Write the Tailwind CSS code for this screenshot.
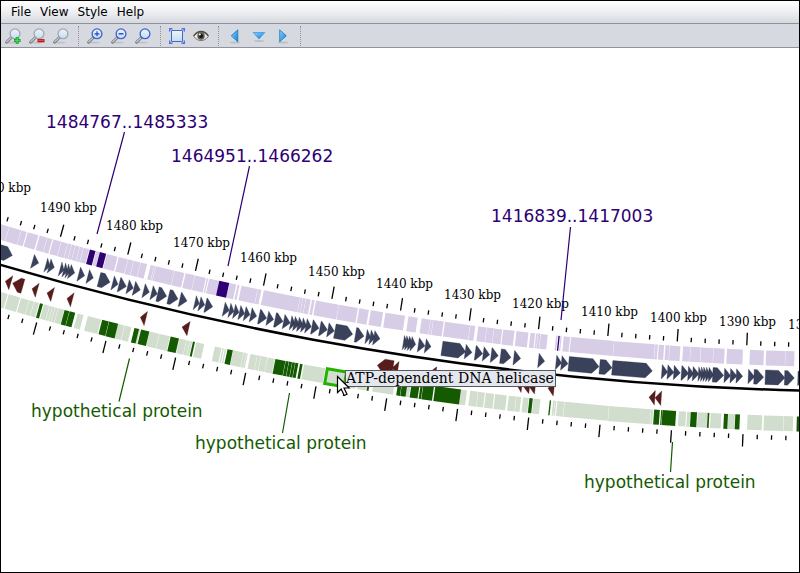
<!DOCTYPE html>
<html lang="en">
<head>
<meta charset="utf-8">
<title>Genome map</title>
<script src="https://cdn.jsdelivr.net/npm/@tailwindcss/browser@4"></script>
</head>
<body class="flex h-screen flex-col overflow-hidden border border-black bg-white font-['DejaVu_Sans',sans-serif] text-black">

<nav aria-label="Main menu" class="flex h-[22px] shrink-0 items-center gap-px bg-linear-to-b from-white via-[#eeeff2] to-[#d6d9df] px-1.5 text-xs">
  <button type="button" class="px-1">File</button>
  <button type="button" class="px-1">View</button>
  <button type="button" class="px-1">Style</button>
  <button type="button" class="px-1">Help</button>
</nav>

<div role="toolbar" aria-label="Map tools" class="flex h-[25px] shrink-0 items-center border-y border-[#8f929c] bg-[#d6d9df]">
  <svg class="absolute size-0" aria-hidden="true">
    <defs>
      <linearGradient id="blue" x1="0" y1="0" x2="1" y2="1">
        <stop offset="0" stop-color="#8fd0fa"/><stop offset="1" stop-color="#0f7fd8"/>
      </linearGradient>
      <linearGradient id="glass" x1="0" y1="0" x2="0" y2="1">
        <stop offset="0" stop-color="#eaf4fd"/><stop offset="1" stop-color="#c6dcf0"/>
      </linearGradient>
      <symbol id="lens" viewBox="0 0 16 16">
        <ellipse cx="7" cy="14.6" rx="6" ry="1" fill="#000" fill-opacity=".1"/>
        <path d="M1.6 14.2 6.4 9.6" stroke="#77797e" stroke-width="2.8" stroke-linecap="round"/>
        <path d="M1.7 13.9 6.2 9.6" stroke="#d4d5d8" stroke-width="1.1" stroke-linecap="round"/>
        <circle cx="10" cy="5.8" r="4.9" fill="url(#glass)" stroke="currentColor" stroke-width="1.3"/>
      </symbol>
    </defs>
  </svg>
  <button type="button" aria-label="Add" class="flex w-6 justify-center text-[#a3a6ab]">
    <svg class="size-4" viewBox="0 0 16 16"><use href="#lens"/><path d="M9 12.5h6.500M12.200 9.300v6.500" stroke="#0b9a24" stroke-width="3"/><path d="M9.600 12.500h5.200M12.200 10v5" stroke="#3fe04f" stroke-width="1.400"/></svg>
  </button>
  <button type="button" aria-label="Remove" class="flex w-6 justify-center text-[#a3a6ab]">
    <svg class="size-4" viewBox="0 0 16 16"><use href="#lens"/><path d="M8.500 12.700h7" stroke="#b30f12" stroke-width="3.200"/><path d="M9.200 12.500h5.600" stroke="#f0494a" stroke-width="1.300"/></svg>
  </button>
  <button type="button" aria-label="Reset" class="flex w-6 justify-center text-[#a3a6ab]">
    <svg class="size-4" viewBox="0 0 16 16"><use href="#lens"/></svg>
  </button>
  <span class="ml-[5px] mr-1 h-5 border-l border-dotted border-[#8f929c]"></span>
  <button type="button" aria-label="Zoom in" class="flex w-6 justify-center text-[#3a62d0]">
    <svg class="size-4" viewBox="0 0 16 16"><use href="#lens"/><path d="M7.500 5.800h5M10 3.300v5" stroke="#2448b8" stroke-width="1.200"/></svg>
  </button>
  <button type="button" aria-label="Zoom out" class="flex w-6 justify-center text-[#3a62d0]">
    <svg class="size-4" viewBox="0 0 16 16"><use href="#lens"/><path d="M7.500 5.800h5" stroke="#2448b8" stroke-width="1.400"/></svg>
  </button>
  <button type="button" aria-label="Zoom normal" class="flex w-6 justify-center text-[#3a62d0]">
    <svg class="size-4" viewBox="0 0 16 16"><use href="#lens"/></svg>
  </button>
  <span class="ml-[5px] mr-1 h-5 border-l border-dotted border-[#8f929c]"></span>
  <button type="button" aria-label="Full view" class="flex w-6 justify-center">
    <svg class="size-4" viewBox="0 0 16 16" fill="none"><rect x="2.500" y="2.500" width="11" height="11" rx=".5" fill="url(#glass)" stroke="#4666c0"/><path d="M.7 3.500V.7h2.800M12.500.7h2.800v2.800M15.300 12.500v2.800h-2.800M3.500 15.300H.7v-2.800" stroke="#4774e8" stroke-width="1.400"/></svg>
  </button>
  <button type="button" aria-label="Show or hide labels" class="flex w-6 justify-center">
    <svg class="size-4" viewBox="0 0 16 16"><path d="M.8 8.600C3 5.200 5.500 4 8 4s5.200 1.300 7.200 4.600C13 11.400 10.600 12.500 8 12.500S3 11.400.8 8.600Z" fill="#eceae6" stroke="#77736d" stroke-width="1"/><path d="M.6 8C3 4.400 5.500 3.500 8 3.500S13.200 4.400 15.400 8" fill="none" stroke="#4e4a46" stroke-width="1.300"/><circle cx="8" cy="8" r="3.700" fill="#5a5551"/><circle cx="8" cy="8" r="2" fill="#151312"/><circle cx="6.800" cy="6.600" r="1" fill="#fff"/></svg>
  </button>
  <span class="ml-[5px] mr-1 h-5 border-l border-dotted border-[#8f929c]"></span>
  <button type="button" aria-label="Move left" class="flex w-6 justify-center">
    <svg class="size-4" viewBox="0 0 16 16"><ellipse cx="8" cy="14.500" rx="5" ry="1" fill-opacity=".12"/><path d="M10.800 1.800v12L4.200 7.800Z" fill="url(#blue)" stroke="#1878c4" stroke-width=".8"/></svg>
  </button>
  <button type="button" aria-label="Flip" class="flex w-6 justify-center">
    <svg class="size-4" viewBox="0 0 16 16"><ellipse cx="8" cy="13" rx="5" ry="1" fill-opacity=".12"/><path d="M2.200 4.500h11.600L8 11Z" fill="url(#blue)" stroke="#3f9ade" stroke-width=".8"/></svg>
  </button>
  <button type="button" aria-label="Move right" class="flex w-6 justify-center">
    <svg class="size-4" viewBox="0 0 16 16"><ellipse cx="8" cy="14.500" rx="5" ry="1" fill-opacity=".12"/><path d="M4.700 1.800v12l6.600-6Z" fill="url(#blue)" stroke="#1878c4" stroke-width=".8"/></svg>
  </button>
  <span class="ml-[5px] mr-1 h-5 border-l border-dotted border-[#8f929c]"></span>
</div>

<main class="min-h-0 flex-1 overflow-hidden">
  <svg role="img" aria-label="Circular genome map, zoomed" class="block size-full" viewBox="1 48 798 524" preserveAspectRatio="xMinYMin slice">
    <g id="tracks"></g>
    <g id="scale" class="font-['DejaVu_Serif',serif] text-[12px]"></g>
    <g class="text-[17px]" fill="#2e0073" stroke="none">
      <text x="46" y="128">1484767..1485333</text>
      <text x="171" y="162">1464951..1466262</text>
      <text x="491" y="222">1416839..1417003</text>
    </g>
    <path d="M124.500 132 97 234M249.500 166 228 266M570.500 227 561 320" stroke="#2e0073" stroke-width="1.200"/>
    <g class="text-[17px]" fill="#145a00">
      <text x="31" y="417">hypothetical protein</text>
      <text x="195" y="449">hypothetical protein</text>
      <text x="584" y="488">hypothetical protein</text>
    </g>
    <path d="M129.500 358.500 119 401.500M289.500 393l-7 40M672.500 442l-2 30" stroke="#145a00" stroke-width="1.200"/>
    <g id="selection"></g>
    <rect x="345.500" y="370.500" width="210" height="16" fill="#e4e7ed" stroke="#55585e"/>
    <text x="346" y="383" class="font-['DejaVu_Serif',serif] text-[14px]">ATP-dependent DNA helicase</text>
    <path d="M337.500 376.500v16l3.700-3.500 3 6.500 2.800-1.300-3-6.200h5.200Z" fill="#fff" stroke="#000" stroke-width="1.200"/>
  </svg>
</main>

<script>
// The map is a large circle whose centre lies far above the window.
const CX = 878, CY = -2712;
const at = (a, r) => [CX - r * Math.sin(a), CY + r * Math.cos(a)];
// Feature positions are stored in thirds of a map unit along the track's centre line.
const angle = (u, r) => Math.asin((CX - u / 3) / r);
const poly = (pts, fill, extra = '') =>
  `<polygon points="${pts.map(p => p[0].toFixed(2) + ',' + p[1].toFixed(2)).join(' ')}" fill="${fill}" ${extra}/>`;
const pairs = s => s.trim().split(/\s+/).map(p => p.split(':').map(Number));

// Neighbours that almost touch are drawn with only a hairline seam between them.
function boxes(data, r0, r1, fill) {
  const c = (r0 + r1) / 2;
  return pairs(data).map(([s, e], i, all) => {
    const next = all[i + 1];
    const end = next && next[0] - e > 0 && next[0] - e <= 2 ? next[0] - 0.9 : e;
    const a = angle(s, c), b = angle(end, c);
    return poly([at(a, r0), at(b, r0), at(b, r1), at(a, r1)], fill);
  }).join('');
}

// Arrows run from tail to tip; the tip may lie on either side.
// The tail position is its outermost corner, so the slanted edge's middle sits further in.
function arrows(data, r0, r1, head, fill, edge) {
  const c = (r0 + r1) / 2;
  return pairs(data).map(([t, p]) => {
    const dir = Math.sign(p - t);
    const tail = t + dir * 0.9 * 1.5 * (r1 - r0) * Math.sin(angle(t, c));
    const n = p - dir * Math.min(head, Math.abs(p - tail));
    const a = angle(tail, c), b = angle(n, c), q = angle(p, c);
    return poly([at(a, r0), at(b, r0), at(q, c), at(b, r1), at(a, r1)], fill, `stroke="${edge}" stroke-width=".3"`);
  }).join('');
}

const forward = `-10:21 22:56 58:74 77:109 113:134 136:151 154:176 178:197 198:208 210:220 221:232 234:244 245:262
 283:293 315:347 351:378 379:394 396:415 417:436 447:457 458:461 463:517 519:548 552:578 580:613 616:620 623:653
 684:704 708:714 720:767 769:780 787:895 897:903 905:912 914:928 932:940 944:1012 1013:1070 1074:1103 1109:1146
 1153:1212 1222:1250 1262:1287 1289:1295 1297:1328 1332:1406 1408:1423 1432:1456 1458:1478 1480:1504 1507:1541
 1547:1583 1589:1603 1606:1610 1612:1618 1620:1641 1666:1671 1679:1683 1689:1708 1711:1839 1841:1962 1964:1972
 1975:1991 1995:2007 2008:2040 2048:2069 2071:2100 2102:2138 2140:2173 2180:2228 2249:2291 2298:2355 2356:2383`;
const forwardHit = `264:281 294:313 653:683 1673:1677`;
const reverse = `-10:17 20:54 57:80 82:95 97:111 126:141 143:150 152:158 160:167 169:187 227:245 258:298 349:367 369:389
 412:416 444:471 473:505 534:553 555:563 565:572 584:608 640:660 663:667 670:674 695:725 727:733 735:739 747:766 768:777
 779:797 799:820 908:972 979:1037 1040:1070 1075:1100 1120:1182 1221:1230 1380:1398 1408:1430 1432:1452 1455:1480
 1483:1518 1524:1545 1547:1561 1567:1584 1598:1619 1657:1661 1663:1667 1670:1690 1692:1824 1826:1950 1952:1958 2035:2057
 2060:2070 2092:2122 2131:2163 2184:2204 2242:2286 2291:2350 2351:2379`;
const reverseHit = `114:123 188:201 203:220 301:321 322:349 398:412 418:443 507:532 574:580 678:694 822:852 853:861
 863:871 873:880 882:891 896:904 1103:1109 1192:1202 1204:1220 1232:1256 1259:1265 1267:1299 1303:1380 1586:1596 1647:1651
 1961:1978 1982:1985 1986:2027 2071:2090 2122:2127 2171:2183 2205:2219 2390:2420`;
const genes = `-20:37 92:116 132:150 142:163 175:192 186:203 195:211 203:224 231:254 258:280 292:330 333:354 352:379 378:400
 397:421 426:448 450:472 468:500 501:534 535:561 580:598 594:614 612:638 667:688 684:702 698:717 714:734 730:750 748:770
 773:800 798:821 821:849 847:871 868:885 878:898 890:910 902:920 914:934 932:957 956:982 980:1003 1001:1058 1063:1092
 1095:1112 1107:1125 1118:1140 1207:1222 1214:1231 1222:1240 1230:1247 1252:1275 1273:1293 1323:1397 1393:1416 1423:1448
 1447:1469 1471:1495 1499:1533 1539:1562 1613:1634 1666:1685 1682:1704 1704:1797 1797:1836 1835:1957 1984:2003 2001:2022
 2020:2041 2043:2066 2063:2081 2077:2097 2094:2106 2102:2114 2109:2122 2117:2131 2125:2141 2137:2171 2172:2192 2190:2211
 2208:2228 2244:2264 2261:2291 2295:2355 2353:2383 2393:2415`;
const genesBack = `38:16 74:38 117:96 163:141 222:201 442:421 570:546 1182:1132 1197:1177 1310:1286 1568:1550 1591:1568
 1608:1586 1664:1644 1966:1947 1985:1965`;

let out = boxes(forward, 3064.5, 3079.5, '#d8cde6') + boxes(forwardHit, 3064.5, 3079.5, '#2e0073')
  + boxes(reverse, 3129.5, 3144.5, '#d2decd') + boxes(reverseHit, 3129.5, 3144.5, '#145a00')
  + arrows(genes, 3084, 3098.5, 20, '#3a415b', '#1f2740')
  + arrows(genesBack, 3110.5, 3125, 20, '#581c1c', '#3a0c0c')
  + `<circle cx="${CX}" cy="${CY}" r="3103.500" fill="none" stroke="#000" stroke-width="2.500"/>`;

// Ticks every 2 kbp, long ones every 10 kbp.
const tick = (a, r0, r1) => {
  const [x1, y1] = at(a, r0), [x2, y2] = at(a, r1);
  return `<line x1="${x1.toFixed(2)}" y1="${y1.toFixed(2)}" x2="${x2.toFixed(2)}" y2="${y2.toFixed(2)}" stroke="#000" stroke-width="1.300"/>`;
};
for (let k = 1376; k <= 1502; k += 2) {
  const a = 0.04289 + (k - 1390) * 0.0022756, major = k % 10 === 0;
  out += tick(a, major ? 3047.500 : 3055.500, 3060) + tick(a, 3149, major ? 3161.500 : 3153.500);
}
document.getElementById('tracks').innerHTML = out;

document.getElementById('scale').innerHTML = [
  [1500, -26, 192], [1490, 40, 212], [1480, 106, 230], [1470, 173, 247], [1460, 240, 262], [1450, 308, 276],
  [1440, 376, 288], [1430, 444, 299], [1420, 512, 308], [1410, 581, 316], [1400, 650, 322], [1390, 719, 326], [1380, 788, 329]
].map(([k, x, y]) => `<text x="${x}" y="${y}">${k} kbp</text>`).join('');

const s0 = angle(978, 3137), s1 = angle(1036, 3137);
document.getElementById('selection').innerHTML =
  poly([at(s0, 3129.500), at(s1, 3129.500), at(s1, 3144.500), at(s0, 3144.500)], '#d2decd', 'stroke="#22b200" stroke-width="3"');
</script>
</body>
</html>
